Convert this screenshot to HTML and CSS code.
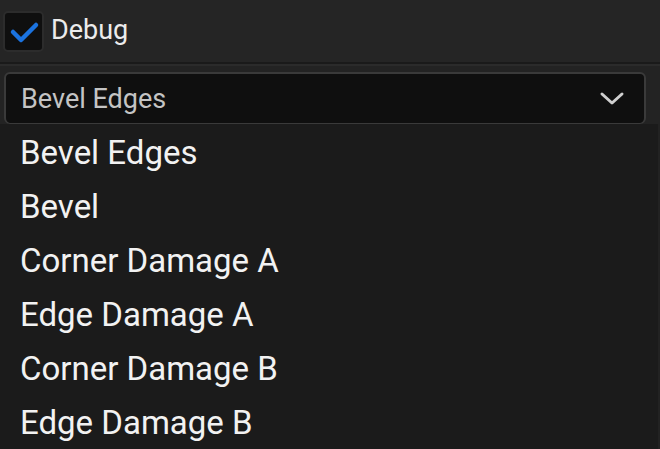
FILE: index.html
```html
<!DOCTYPE html>
<html>
<head>
<meta charset="utf-8">
<link rel="stylesheet" href="styles.css">
</head>
<body>
<div class="topbar">
  <div class="checkbox">
    <svg width="37" height="37" viewBox="0 0 37 37"><path d="M8 19 L16 27 L31 12" fill="none" stroke="#1b73e0" stroke-width="4.5" stroke-linecap="round" stroke-linejoin="round"/></svg>
  </div>
  <span class="label">Debug</span>
</div>
<div class="divider"></div>
<div class="field-area">
  <div class="dropdown">
    <span class="dropdown-text">Bevel Edges</span>
    <svg class="chevron" width="26" height="16" viewBox="0 0 26 16"><path d="M3 3 L13 12 L23 3" fill="none" stroke="#cfcfcf" stroke-width="3" stroke-linecap="round" stroke-linejoin="round"/></svg>
  </div>
</div>
<ul class="menu">
  <li class="item">Bevel Edges</li>
  <li class="item">Bevel</li>
  <li class="item">Corner Damage A</li>
  <li class="item">Edge Damage A</li>
  <li class="item">Corner Damage B</li>
  <li class="item">Edge Damage B</li>
</ul>
</body>
</html>
```
FILE: styles.css
```css
html, body {
  margin: 0;
  padding: 0;
  background: #1b1b1b;
  width: 660px;
  height: 449px;
  overflow: hidden;
  font-family: Roboto, "Liberation Sans", sans-serif;
}
.topbar {
  height: 62px;
  background: #252525;
  display: flex;
  align-items: center;
  padding-left: 3px;
  gap: 7px;
}
.checkbox {
  width: 37px;
  height: 37px;
  background: #0f0f0f;
  border: 2px solid #2c2c2c;
  border-radius: 5px;
  display: flex;
  align-items: center;
  justify-content: center;
}
.checkbox svg {
  display: block;
}
.label {
  font-size: 27px;
  color: #ececec;
  margin-top: -2px;
}
.divider {
  height: 2px;
  background: #1a1a1a;
  border-bottom: 2px solid #2b2b2b;
}
.field-area {
  background: #232323;
  padding: 6px 14px 0 4px;
}
.dropdown {
  height: 49px;
  background: #0f0f0f;
  border: 2px solid #3a3a3a;
  border-bottom-width: 1px;
  border-radius: 6px;
  display: flex;
  align-items: center;
  justify-content: space-between;
  padding: 0 19px 0 15px;
}
.dropdown-text {
  font-size: 27px;
  color: #c4c4c4;
}
.chevron {
  display: block;
}
.menu {
  list-style: none;
  margin: 0;
  padding: 2px 0 0 20px;
  border-right: 2px solid #222222;
}
.item {
  height: 54px;
  line-height: 54px;
  font-size: 33px;
  color: #f2f2f2;
}
```
